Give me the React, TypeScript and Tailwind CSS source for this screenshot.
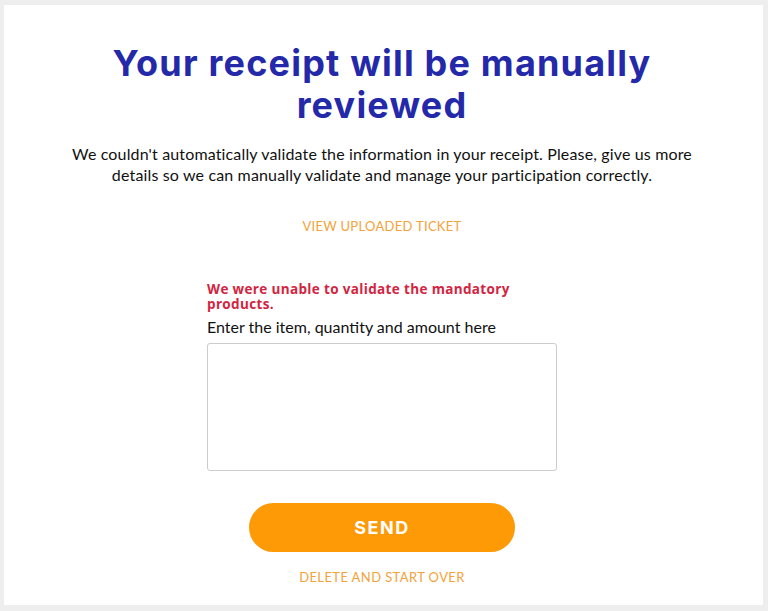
import React from "react";

export default function App() {
  return (
    <div className="h-[611px] w-[768px] bg-[#eeeeee] pt-[5px] pl-[4px] pr-[5px] pb-[6px]">
      <div className="flex h-full flex-col items-center bg-white pr-[3px] pt-[37px] font-['Lato',sans-serif]">
        {/* Title */}
        <h1 className="w-[620px] text-center font-['Inter',sans-serif] text-[36px] font-bold leading-[42px] tracking-[1.2px] text-[#2329a8]">
          Your receipt will be manually reviewed
        </h1>
        <p className="mt-[17px] w-[660px] text-center text-[16px] leading-[21px] tracking-[0.15px] text-[#111]">
          We couldn't automatically validate the information in your receipt. Please, give us more details so we can manually validate and manage your participation correctly.
        </p>

        <a className="mt-[33px] text-[13px] leading-[16px] tracking-[0.3px] text-[#f4a23a]" href="#">
          VIEW UPLOADED TICKET
        </a>

        {/* Form */}
        <div className="mt-[48px] flex w-[350px] flex-col">
          <p className="w-[330px] font-['Open_Sans',sans-serif] text-[13.5px] font-bold leading-[15px] tracking-[0.35px] text-[#d3243f]">
            We were unable to validate the mandatory products.
          </p>
          <label className="mt-[5px] text-[16px] leading-[20px] text-[#111]">
            Enter the item, quantity and amount here
          </label>
          <textarea className="mt-[6px] h-[128px] w-[350px] resize-none rounded-[3px] border border-[#cccccc] bg-white" />
        </div>

        <button className="mt-[32px] h-[49px] w-[266px] rounded-full bg-[#fd9a05] font-['Inter',sans-serif] text-[18px] font-bold tracking-[1.5px] text-white">
          SEND
        </button>

        <a className="mt-[17px] text-[13px] leading-[16px] tracking-[0.4px] text-[#f4a23a]" href="#">
          DELETE AND START OVER
        </a>
      </div>
    </div>
  );
}
